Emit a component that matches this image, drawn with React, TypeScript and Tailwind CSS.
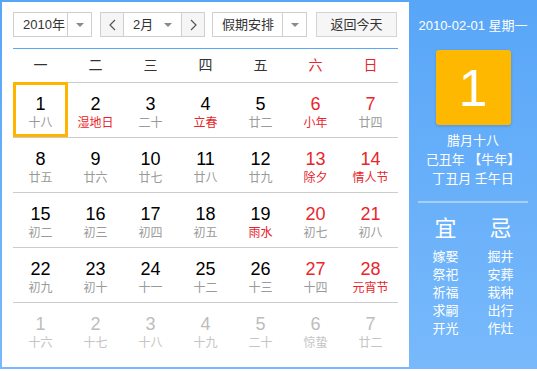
import React from 'react';

type Day = { n: number; lunar: string; red?: boolean; lunarRed?: boolean; other?: boolean };

const WEEK = ['一', '二', '三', '四', '五', '六', '日'];

const rows: Day[][] = [
  [
    { n: 1, lunar: '十八' },
    { n: 2, lunar: '湿地日', lunarRed: true },
    { n: 3, lunar: '二十' },
    { n: 4, lunar: '立春', lunarRed: true },
    { n: 5, lunar: '廿二' },
    { n: 6, lunar: '小年', red: true, lunarRed: true },
    { n: 7, lunar: '廿四', red: true },
  ],
  [
    { n: 8, lunar: '廿五' },
    { n: 9, lunar: '廿六' },
    { n: 10, lunar: '廿七' },
    { n: 11, lunar: '廿八' },
    { n: 12, lunar: '廿九' },
    { n: 13, lunar: '除夕', red: true, lunarRed: true },
    { n: 14, lunar: '情人节', red: true, lunarRed: true },
  ],
  [
    { n: 15, lunar: '初二' },
    { n: 16, lunar: '初三' },
    { n: 17, lunar: '初四' },
    { n: 18, lunar: '初五' },
    { n: 19, lunar: '雨水', lunarRed: true },
    { n: 20, lunar: '初七', red: true },
    { n: 21, lunar: '初八', red: true },
  ],
  [
    { n: 22, lunar: '初九' },
    { n: 23, lunar: '初十' },
    { n: 24, lunar: '十一' },
    { n: 25, lunar: '十二' },
    { n: 26, lunar: '十三' },
    { n: 27, lunar: '十四', red: true },
    { n: 28, lunar: '元宵节', red: true, lunarRed: true },
  ],
  [
    { n: 1, lunar: '十六', other: true },
    { n: 2, lunar: '十七', other: true },
    { n: 3, lunar: '十八', other: true },
    { n: 4, lunar: '十九', other: true },
    { n: 5, lunar: '二十', other: true },
    { n: 6, lunar: '惊蛰', other: true },
    { n: 7, lunar: '廿二', other: true },
  ],
];

const yi = ['嫁娶', '祭祀', '祈福', '求嗣', '开光'];
const ji = ['掘井', '安葬', '栽种', '出行', '作灶'];

const Caret = () => (
  <svg width="8" height="4" viewBox="0 0 8 4" className="block">
    <path d="M0 0h8L4 4z" fill="#8a8a8a" />
  </svg>
);

const Chevron = ({ dir }: { dir: 'l' | 'r' }) => (
  <svg width="7" height="12" viewBox="0 0 7 12" className="block">
    <path d={dir === 'l' ? 'M6 1L1 6l5 5' : 'M1 1l5 5-5 5'} fill="none" stroke="#555" strokeWidth="1.2" />
  </svg>
);

const DayCell = ({ d, selected }: { d: Day; selected?: boolean }) => {
  const numColor = d.other ? 'text-[#bdbdbd]' : d.red ? 'text-[#e8262c]' : 'text-black';
  const lunarColor = d.other ? 'text-[#c4c4c4]' : d.lunarRed ? 'text-[#e8262c]' : 'text-[#9a9a9a]';
  return (
    <div className="relative flex h-[54px] flex-col items-center pt-[11px]">
      {selected && <div className="absolute inset-x-0 -top-px bottom-0 border-[3px] border-[#ffb500]" />}
      <div className={`text-[18px] leading-[20px] ${numColor}`}>{d.n}</div>
      <div className={`mt-px text-[12px] leading-[16px] ${lunarColor}`}>{d.lunar}</div>
    </div>
  );
};

export default function App() {
  return (
    <div
      className="flex h-[369px] w-[537px] bg-gradient-to-b from-[#58a6f8] to-[#78b9fb] pb-[2px] pl-[2px] pt-[2px]"
      style={{ fontFamily: '"Liberation Sans", "Noto Sans CJK SC", sans-serif' }}
    >
      {/* calendar side */}
      <div className="w-[407px] bg-white pl-[11px] pt-[10px]">
        <div className="flex h-[25px] text-[13px] text-[#333]">
          <div className="flex w-[79px] border border-[#cfcfcf] bg-white">
            <div className="flex flex-1 items-center pl-[9px]">2010年</div>
            <div className="flex w-[24px] items-center justify-center border-l border-[#cfcfcf]">
              <Caret />
            </div>
          </div>
          <div className="ml-[8px] flex w-[105px] border border-[#cfcfcf]">
            <div className="flex w-[22px] items-center justify-center bg-[#f5f5f5]">
              <Chevron dir="l" />
            </div>
            <div className="flex flex-1 items-center border-x border-[#cfcfcf] bg-white pl-[9px] pr-[9px]">
              <span className="flex-1">2月</span>
              <Caret />
            </div>
            <div className="flex w-[22px] items-center justify-center bg-[#f5f5f5]">
              <Chevron dir="r" />
            </div>
          </div>
          <div className="ml-[7px] flex w-[95px] border border-[#cfcfcf] bg-white">
            <div className="flex flex-1 items-center pl-[9px]">假期安排</div>
            <div className="flex w-[24px] items-center justify-center border-l border-[#cfcfcf]">
              <Caret />
            </div>
          </div>
          <div className="ml-[9px] flex w-[81px] items-center justify-center border border-[#d4d4d4] bg-[#f6f6f6]">
            返回今天
          </div>
        </div>

        <div className="mt-[11px] h-px w-[385px] bg-[#5aa8f8]" />

        <div className="grid h-[33px] w-[385px] grid-cols-7 items-center text-[14px]">
          {WEEK.map((w, i) => (
            <div key={w} className={`text-center ${i >= 5 ? 'text-[#e8262c]' : 'text-[#333]'}`}>
              {w}
            </div>
          ))}
        </div>

        <div className="w-[385px]">
          {rows.map((row, ri) => (
            <div key={ri} className="grid grid-cols-7 border-t border-[#cccccc]">
              {row.map((d, ci) => (
                <DayCell key={ci} d={d} selected={ri === 0 && ci === 0} />
              ))}
            </div>
          ))}
        </div>
      </div>

      {/* info side */}
      <div className="flex flex-1 flex-col items-center pt-[16px] text-white">
        <div className="text-[13px] leading-[16px]">2010-02-01 星期一</div>
        <div className="mt-[16px] flex h-[75px] w-[75px] items-center justify-center rounded-[3px] bg-[#ffb800] text-[52px] leading-none shadow-[0_1px_3px_rgba(0,0,0,0.15)]">
          1
        </div>
        <div className="mt-[6px] text-center text-[13px] leading-[19px]">
          <div>腊月十八</div>
          <div>己丑年 【牛年】</div>
          <div>丁丑月 壬午日</div>
        </div>
        <div className="mt-[13px] h-[2px] w-[110px] bg-white/40" />
        <div className="mt-[13px] flex">
          <div className="flex w-[55px] flex-col items-center">
            <div className="text-[22px] leading-[26px]">宜</div>
            <div className="mt-[6px] text-[13px] leading-[18px]">
              {yi.map((t) => (
                <div key={t}>{t}</div>
              ))}
            </div>
          </div>
          <div className="flex w-[55px] flex-col items-center">
            <div className="text-[22px] leading-[26px]">忌</div>
            <div className="mt-[6px] text-[13px] leading-[18px]">
              {ji.map((t) => (
                <div key={t}>{t}</div>
              ))}
            </div>
          </div>
        </div>
      </div>
    </div>
  );
}
